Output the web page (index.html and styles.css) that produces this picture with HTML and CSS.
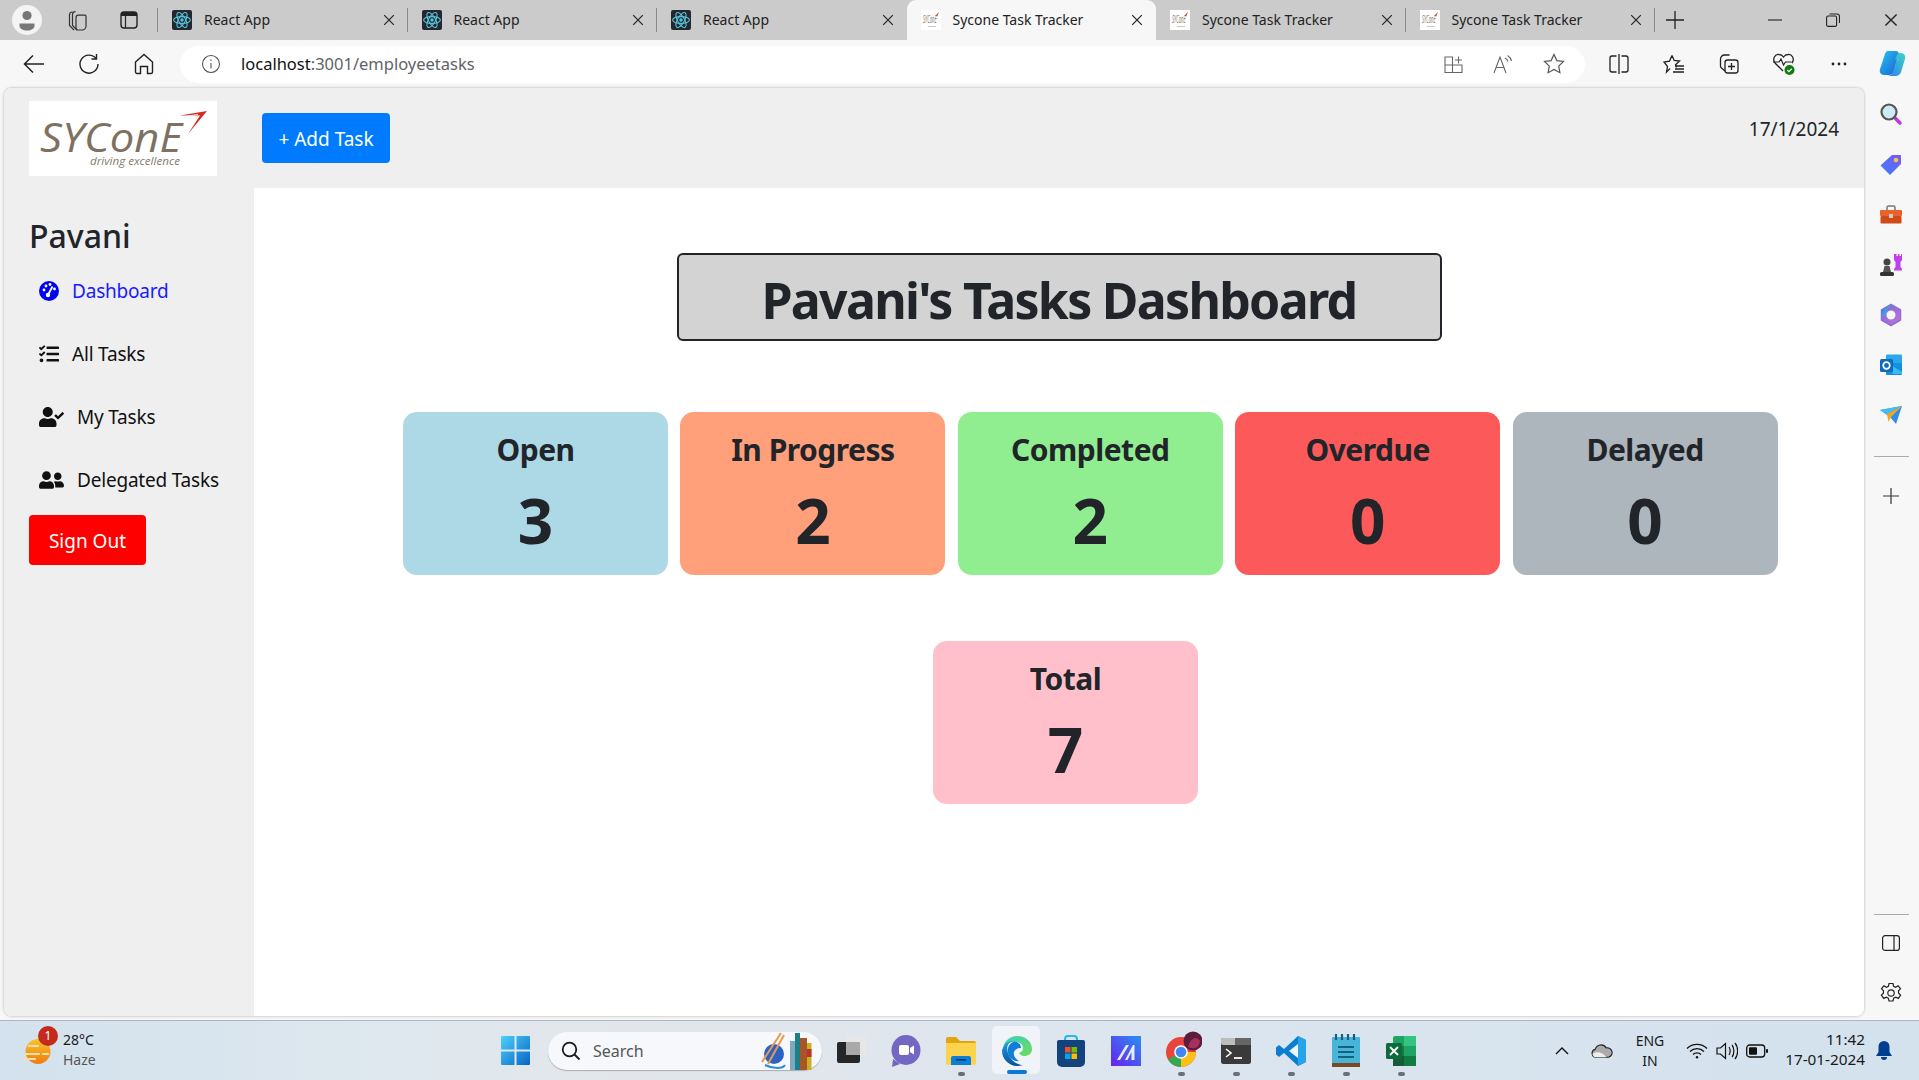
FILE: index.html
```html
<!DOCTYPE html>
<html lang="en">
<head>
<meta charset="utf-8">
<title>Sycone Task Tracker</title>
<link rel="stylesheet" href="styles.css">
</head>
<body>
<svg class="defs" width="0" height="0" aria-hidden="true">
  <symbol id="react" viewBox="0 0 20 20">
    <rect width="20" height="20" rx="2" fill="#23272f"/>
    <g fill="none" stroke="#58c4dc" stroke-width="1.1">
      <ellipse cx="10" cy="10" rx="8.4" ry="3.4"/>
      <ellipse cx="10" cy="10" rx="8.4" ry="3.4" transform="rotate(60 10 10)"/>
      <ellipse cx="10" cy="10" rx="8.4" ry="3.4" transform="rotate(120 10 10)"/>
    </g>
    <circle cx="10" cy="10" r="1.7" fill="#58c4dc"/>
  </symbol>
  <symbol id="x" viewBox="0 0 12 12"><path d="M1.2 1.2 10.8 10.8M10.8 1.2 1.2 10.8" stroke="#222" stroke-width="1.2" fill="none"/></symbol>
</svg>
<div class="window">
  <header class="tabstrip">
    <div class="strip-left">
      <span class="avatar"><svg width="30" height="30" viewBox="0 0 30 30"><circle cx="15" cy="15" r="15" fill="#f4f4f4"/><circle cx="15" cy="10.5" r="4.6" fill="#777"/><path d="M7.5 18.5h15v2.2c0 3-3.4 4.8-7.5 4.8s-7.5-1.8-7.5-4.8z" fill="#777"/></svg></span>
      <span class="strip-btn"><svg width="22" height="24" viewBox="0 0 22 24" fill="none" stroke="#333" stroke-width="1.2"><path d="M8 22 3.5 17.5V7c0-2 1-3 3-3"/><path d="M11 22 6.5 17.5V6.5c0-1.8 1-2.8 3-2.8"/><path d="M10 9.5c0-1.4 1-2.3 2.3-2.3H19c.6 0 1 .4 1 1V18c0 2.200-1.800 4-4 4h-4c-1.200 0-2-.8-2-2z"/></svg></span>
      <span class="strip-btn"><svg width="20" height="20" viewBox="0 0 20 20"><rect x="2" y="2" width="16" height="16" rx="3" fill="none" stroke="#222" stroke-width="1.4"/><path d="M2 5a3 3 0 0 1 3-3h10a3 3 0 0 1 3 3v1H2z" fill="#222"/><path d="M6.500 6v12" stroke="#222" stroke-width="1.2"/></svg></span>
    </div>
    <div class="tab"><svg class="fav"><use href="#react"/></svg><span class="tab-title">React App</span><svg class="tab-x"><use href="#x"/></svg></div>
    <div class="tab"><svg class="fav"><use href="#react"/></svg><span class="tab-title">React App</span><svg class="tab-x"><use href="#x"/></svg></div>
    <div class="tab tab-nosep"><svg class="fav"><use href="#react"/></svg><span class="tab-title">React App</span><svg class="tab-x"><use href="#x"/></svg></div>
    <div class="tab tab-active"><svg class="fav" viewBox="0 0 20 20"><rect width="20" height="20" fill="#fff"/><text class="fav-name" transform="translate(2 13) scale(.42 1)">SYConE</text><path d="M15 5 L18 2 L16 7Z" fill="#d23a2a"/><path d="M7 16.5h8" stroke="#bbb" stroke-width=".8"/></svg><span class="tab-title">Sycone Task Tracker</span><svg class="tab-x"><use href="#x"/></svg></div>
    <div class="tab"><svg class="fav" viewBox="0 0 20 20"><rect width="20" height="20" fill="#fff"/><text class="fav-name" transform="translate(2 13) scale(.42 1)">SYConE</text><path d="M15 5 L18 2 L16 7Z" fill="#d23a2a"/><path d="M7 16.5h8" stroke="#bbb" stroke-width=".8"/></svg><span class="tab-title">Sycone Task Tracker</span><svg class="tab-x"><use href="#x"/></svg></div>
    <div class="tab"><svg class="fav" viewBox="0 0 20 20"><rect width="20" height="20" fill="#fff"/><text class="fav-name" transform="translate(2 13) scale(.42 1)">SYConE</text><path d="M15 5 L18 2 L16 7Z" fill="#d23a2a"/><path d="M7 16.5h8" stroke="#bbb" stroke-width=".8"/></svg><span class="tab-title">Sycone Task Tracker</span><svg class="tab-x"><use href="#x"/></svg></div>
    <span class="new-tab"><svg width="18" height="18" viewBox="0 0 18 18"><path d="M9 0v18M0 9h18" stroke="#222" stroke-width="1.300"/></svg></span>
    <div class="win-controls">
      <svg width="14" height="14" viewBox="0 0 14 14"><path d="M0 7h14" stroke="#222" stroke-width="1.100"/></svg>
      <svg width="14" height="14" viewBox="0 0 14 14" fill="none" stroke="#222" stroke-width="1.100"><rect x=".6" y="3" width="10" height="10.400" rx="1.500"/><path d="M3.500 1h7.500a2.500 2.500 0 0 1 2.500 2.500V10"/></svg>
      <svg width="14" height="14" viewBox="0 0 14 14"><use href="#x"/></svg>
    </div>
  </header>

  <div class="toolbar">
    <span class="tool"><svg width="22" height="20" viewBox="0 0 22 20" fill="none" stroke="#222" stroke-width="1.500"><path d="M21 10H2M10 1.500 1.500 10l8.500 8.500"/></svg></span>
    <span class="tool"><svg width="22" height="22" viewBox="0 0 22 22" fill="none" stroke="#222" stroke-width="1.400"><path d="M18 5.500A9 9 0 1 0 20 11"/><path d="M18.500 1v5h-5"/></svg></span>
    <span class="tool"><svg width="20" height="22" viewBox="0 0 20 22" fill="none" stroke="#222" stroke-width="1.400"><path d="M1.500 9 10 1.500 18.500 9v10a1.500 1.500 0 0 1-1.500 1.500h-3.500V13.500h-7v7H3A1.500 1.500 0 0 1 1.500 19z"/></svg></span>
    <div class="address">
      <span class="info"><svg width="20" height="20" viewBox="0 0 20 20" fill="none" stroke="#555" stroke-width="1.100"><circle cx="10" cy="10" r="8.500"/><path d="M10 9v5.500M10 5.500v1.400"/></svg></span>
      <span class="url"><span class="url-host">localhost</span>:3001/employeetasks</span>
      <span class="addr-icon"><svg width="20" height="20" viewBox="0 0 20 20" fill="none" stroke="#666" stroke-width="1.100"><path d="M1 3h7.500v15.500H1zM1 11h17v7.500H8.500V3M11 6h7M14.500 2.500v7"/></svg></span>
      <span class="addr-icon"><svg width="22" height="20" viewBox="0 0 22 20" fill="none" stroke="#666" stroke-width="1.100"><path d="M1 19 7 3l6 16M3 13.500h8"/><path d="M12 4c1.500.8 2.500 2 3 3.500M14.500 1.500c2 1.200 3.500 3 4 5.500"/></svg></span>
      <span class="addr-icon"><svg width="22" height="22" viewBox="0 0 22 22" fill="none" stroke="#555" stroke-width="1.200"><path d="M11 1.500l2.900 6.100 6.600.9-4.800 4.600 1.200 6.600-5.900-3.200-5.900 3.200 1.200-6.600L1.500 8.500l6.600-.9z"/></svg></span>
    </div>
    <span class="tool tool-first"><svg width="20" height="20" viewBox="0 0 20 20" fill="none" stroke="#222" stroke-width="1.300"><path d="M7.500 2H3a2 2 0 0 0-2 2v12a2 2 0 0 0 2 2h4.500M12.500 2H17a2 2 0 0 1 2 2v12a2 2 0 0 1-2 2h-4.500M10 0v20"/></svg></span>
    <span class="tool"><svg width="22" height="20" viewBox="0 0 22 20" fill="none" stroke="#222" stroke-width="1.300"><path d="M9 1.500l2.200 5 5.300.6-3.900 3.600.9 2.800M7 14.500l-3.500 3.500 1-5.500L1 8l5.500-.9L9 1.500M12 12h9M12 15h9M10 18h11"/></svg></span>
    <span class="tool"><svg width="22" height="22" viewBox="0 0 22 22" fill="none" stroke="#222" stroke-width="1.300"><path d="M7 18 3 14.500a2 2 0 0 1-.5-1.500V6a4 4 0 0 1 4-4h5"/><rect x="7" y="7" width="13" height="13" rx="2.500"/><path d="M13.500 10v7M10 13.500h7"/></svg></span>
    <span class="tool tool-health"><svg width="24" height="24" viewBox="0 0 24 24"><path d="M11 19 3 11c-3-4 0-9 4-8.500 2 0 3.500 1 4.500 2.500 1-1.500 2.500-2.500 4.500-2.500 4-.5 7 4.500 4 8.500" fill="none" stroke="#222" stroke-width="1.300"/><path d="M1 10h6l2-3 2.500 6 2-3h6" fill="none" stroke="#222" stroke-width="1.200"/><circle cx="17.500" cy="18" r="5" fill="#107c10"/><path d="M15.300 18l1.600 1.600 2.900-3" stroke="#fff" stroke-width="1.200" fill="none"/></svg></span>
    <span class="tool"><svg width="16" height="4" viewBox="0 0 16 4" fill="#222"><circle cx="2" cy="2" r="1.400"/><circle cx="8" cy="2" r="1.400"/><circle cx="14" cy="2" r="1.400"/></svg></span>
    <span class="tool tool-copilot"><svg width="30" height="30" viewBox="0 0 30 30"><defs><linearGradient id="cop1" x1="0" y1="0" x2="1" y2="1"><stop offset="0" stop-color="#28c4ee"/><stop offset="1" stop-color="#1a5fd8"/></linearGradient><linearGradient id="cop2" x1="0" y1="1" x2="1" y2="0"><stop offset="0" stop-color="#2e7be8"/><stop offset="1" stop-color="#3ed6c8"/></linearGradient></defs><path d="M10 2h8c2 0 3 1.500 2.500 3L16 22c-.8 2.500-2.500 4-5 4H6c-3 0-5-3-4-6L7 5c.5-2 1.500-3 3-3z" fill="url(#cop1)"/><path d="M20 4h3c3 0 5 3 4 6l-4 13c-.8 2.500-3 4-5.500 4H9c3 0 5-1.500 6-4l3-10c.5-2 1.500-3 3-3h-4z" fill="url(#cop2)"/></svg></span>
  </div>

  <div class="middle">
    <div class="page">
      <aside class="sidebar">
        <div class="logo">
          <svg width="188" height="75" viewBox="0 0 188 75">
            <text class="logo-name" x="11" y="51" textLength="142" lengthAdjust="spacingAndGlyphs">SYConE</text>
            <text class="logo-tag" x="61" y="64" textLength="90" lengthAdjust="spacingAndGlyphs">driving excellence</text>
            <path d="M151 14.500 178 10 159 33 171 14.500Z" fill="#d42a20"/>
            <path d="M155 15.500 169 13.500" stroke="#fff" stroke-width=".9"/>
          </svg>
        </div>
        <h2 class="user-name">Pavani</h2>
        <ul class="nav">
          <li class="nav-item nav-active">
            <svg class="nav-icon" width="20" height="20" viewBox="0 0 20 20"><circle cx="10" cy="10" r="10" fill="#0000f0"/><g fill="#fff"><circle cx="5" cy="9" r="1.400"/><circle cx="7" cy="5" r="1.400"/><circle cx="11" cy="3.500" r="1.400"/><circle cx="15.500" cy="8" r="1.400"/></g><path d="M13.500 5.500 9.500 13" stroke="#fff" stroke-width="1.800"/><circle cx="9" cy="14" r="2.200" fill="#fff"/></svg>
            <span>Dashboard</span>
          </li>
          <li class="nav-item">
            <svg class="nav-icon" width="20" height="20" viewBox="0 0 512 512"><path d="M139.61 35.5a12 12 0 0 0-17 0L58.93 98.81l-22.7-22.12a12 12 0 0 0-17 0L3.53 92.41a12 12 0 0 0 0 17l47.59 47.4a12.78 12.78 0 0 0 17.61 0l15.59-15.62L156.52 69a12.09 12.09 0 0 0 .09-17zm0 159.19a12 12 0 0 0-17 0l-63.68 63.72-22.7-22.1a12 12 0 0 0-17 0L3.53 252a12 12 0 0 0 0 17L51 316.5a12.77 12.77 0 0 0 17.6 0l15.7-15.69 72.2-72.22a12 12 0 0 0 .09-16.9zM64 368c-26.49 0-48.59 21.5-48.59 48S37.53 464 64 464a48 48 0 0 0 0-96zm432 16H208a16 16 0 0 0-16 16v32a16 16 0 0 0 16 16h288a16 16 0 0 0 16-16v-32a16 16 0 0 0-16-16zm0-320H208a16 16 0 0 0-16 16v32a16 16 0 0 0 16 16h288a16 16 0 0 0 16-16V80a16 16 0 0 0-16-16zm0 160H208a16 16 0 0 0-16 16v32a16 16 0 0 0 16 16h288a16 16 0 0 0 16-16v-32a16 16 0 0 0-16-16z"/></svg>
            <span>All Tasks</span>
          </li>
          <li class="nav-item">
            <svg class="nav-icon" width="25" height="20" viewBox="0 0 640 512"><path d="M224 256c70.7 0 128-57.3 128-128S294.700 0 224 0 96 57.300 96 128s57.300 128 128 128zm89.600 32h-16.700c-22.200 10.200-46.900 16-72.900 16s-50.600-5.800-72.900-16h-16.700C60.200 288 0 348.200 0 422.400V464c0 26.500 21.500 48 48 48h352c26.500 0 48-21.500 48-48v-41.600c0-74.200-60.200-134.400-134.400-134.400zm323-128.400l-27.800-28.100c-4.600-4.700-12.100-4.700-16.800-.1l-104.800 104-45.500-45.800c-4.600-4.700-12.100-4.700-16.800-.1l-28.100 27.900c-4.700 4.600-4.700 12.100-.1 16.800l81.700 82.300c4.600 4.700 12.100 4.700 16.800.1l141.300-140.200c4.600-4.700 4.700-12.200.1-16.800z"/></svg>
            <span>My Tasks</span>
          </li>
          <li class="nav-item">
            <svg class="nav-icon" width="25" height="20" viewBox="0 0 640 512"><path d="M192 256c61.900 0 112-50.100 112-112S253.900 32 192 32 80 82.100 80 144s50.100 112 112 112zm76.800 32h-8.300c-20.800 10-43.900 16-68.500 16s-47.600-6-68.500-16h-8.300C51.600 288 0 339.600 0 403.200V432c0 26.500 21.500 48 48 48h288c26.500 0 48-21.500 48-48v-28.800c0-63.600-51.600-115.200-115.200-115.200zM480 256c53 0 96-43 96-96s-43-96-96-96-96 43-96 96 43 96 96 96zm48 32h-3.800c-13.900 4.800-28.600 8-44.200 8s-30.300-3.200-44.200-8H432c-20.400 0-39.200 5.900-55.700 15.400 24.400 26.300 39.700 61.200 39.700 99.800v38.400c0 2.200-.5 4.300-.6 6.400H592c26.500 0 48-21.500 48-48 0-61.900-50.100-112-112-112z"/></svg>
            <span>Delegated Tasks</span>
          </li>
        </ul>
        <button class="sign-out">Sign Out</button>
      </aside>
      <div class="content">
        <div class="topbar">
          <button class="add-task">+ Add Task</button>
          <span class="date">17/1/2024</span>
        </div>
        <main class="dash">
          <h1 class="dash-title">Pavani's Tasks Dashboard</h1>
          <div class="cards">
            <div class="card card-open"><h3 class="card-label">Open</h3><div class="card-num">3</div></div>
            <div class="card card-progress"><h3 class="card-label">In Progress</h3><div class="card-num">2</div></div>
            <div class="card card-done"><h3 class="card-label">Completed</h3><div class="card-num">2</div></div>
            <div class="card card-overdue"><h3 class="card-label">Overdue</h3><div class="card-num">0</div></div>
            <div class="card card-delayed"><h3 class="card-label">Delayed</h3><div class="card-num">0</div></div>
          </div>
          <div class="card card-total"><h3 class="card-label">Total</h3><div class="card-num">7</div></div>
        </main>
      </div>
    </div>
    <nav class="rail">
      <span class="rail-item rail-search"><svg width="24" height="24" viewBox="0 0 24 24"><path d="M15 15l6 6" stroke="#c238e0" stroke-width="3.500" stroke-linecap="round"/><circle cx="10" cy="10" r="7.500" fill="#cfe9f6" stroke="#555" stroke-width="2.200"/></svg></span>
      <span class="rail-item"><svg width="24" height="24" viewBox="0 0 24 24"><defs><linearGradient id="tag" x1="0" y1="1" x2="1" y2="0"><stop offset="0" stop-color="#3a7cff"/><stop offset="1" stop-color="#7a5cf0"/></linearGradient></defs><path d="M13 2h8c.6 0 1 .4 1 1v8L11 22 1.500 12.500z" fill="url(#tag)"/><circle cx="17" cy="7" r="2.300" fill="#f6c744"/></svg></span>
      <span class="rail-item"><svg width="24" height="22" viewBox="0 0 24 22"><path d="M8 6V3.500C8 2.500 8.500 2 9.500 2h5c1 0 1.500.5 1.500 1.500V6" fill="none" stroke="#777" stroke-width="1.500"/><rect x="1" y="6" width="22" height="6" rx="1" fill="#e8622a"/><rect x="1.500" y="12" width="21" height="7.500" rx="1" fill="#cf4a18"/><rect x="10" y="10" width="4" height="4" fill="#ccc"/></svg></span>
      <span class="rail-item"><svg width="24" height="24" viewBox="0 0 24 24"><path d="M16 1h1.500v2H19V1h1.500v2H22V1h1v6l-1.500 2v5l1.500 2v1.500h-8V16l1.500-2V9L15 7V1z" fill="#c040f0"/><circle cx="8" cy="9" r="3.500" fill="#444"/><path d="M5.500 13h5l1.500 6h-8z" fill="#555"/><rect x="1" y="19" width="14" height="4" rx="1.500" fill="#333"/></svg></span>
      <span class="rail-item"><svg width="24" height="24" viewBox="0 0 24 24"><defs><linearGradient id="m3651" x1="0" y1="0" x2="1" y2="1"><stop offset="0" stop-color="#3f6fd8"/><stop offset="1" stop-color="#5cc0e8"/></linearGradient><linearGradient id="m3652" x1="0" y1="0" x2="1" y2="1"><stop offset="0" stop-color="#6a6fd8"/><stop offset="1" stop-color="#d070d8"/></linearGradient></defs><path d="M12 1.500 21.500 7v10L12 22.500 2.500 17V7z" fill="url(#m3652)" stroke="#8a6fd8" stroke-width="1.500" stroke-linejoin="round"/><path d="M12 1.500 2.500 7v7l5.500-3V8z" fill="url(#m3651)"/><circle cx="12" cy="12" r="4.500" fill="#f7f7f7"/></svg></span>
      <span class="rail-item"><svg width="24" height="24" viewBox="0 0 24 24"><rect x="7" y="1.500" width="16" height="11" rx="1" fill="#28a8ea"/><path d="M7 10h16v11a1 1 0 0 1-1 1H8a1 1 0 0 1-1-1z" fill="#1490df"/><path d="M12 12l11 7v2H14z" fill="#50d9ff" opacity=".6"/><rect x="1" y="6" width="13" height="13" rx="1.500" fill="#0f6cbd"/><circle cx="7.500" cy="12.500" r="3.300" fill="none" stroke="#fff" stroke-width="1.700"/></svg></span>
      <span class="rail-item"><svg width="24" height="20" viewBox="0 0 24 20"><path d="M1 5 23 1 17 19 11 12z" fill="#2f8cf0"/><path d="M1 5 23 1 8 9z" fill="#3ec0f4"/><path d="M23 1 8 9l1.500 8 2.500-5z" fill="#f0a820"/></svg></span>
      <span class="rail-sep"></span>
      <span class="rail-item rail-plus"><svg width="16" height="16" viewBox="0 0 16 16"><path d="M8 0v16M0 8h16" stroke="#333" stroke-width="1.200"/></svg></span>
      <span class="rail-sep rail-bottom"></span>
      <span class="rail-item rail-panel"><svg width="18" height="16" viewBox="0 0 18 16" fill="none" stroke="#222" stroke-width="1.200"><rect x=".6" y=".6" width="16.800" height="14.800" rx="2.500"/><path d="M12 .6v14.800"/></svg></span>
      <span class="rail-item rail-gear"><svg width="22" height="22" viewBox="0 0 22 22" fill="none" stroke="#222" stroke-width="1.200"><path d="M9 1.500h4l.6 2.800 2 .9 2.500-1.500 2.400 3.100-2 2 .1 2.400 2 1.900-2.200 3.300-2.600-1.300-2.100 1-.7 2.900H9l-.7-2.900-2-1-2.600 1.300-2.300-3.300 2-1.900.1-2.400-2-2L3.900 3.700l2.500 1.500 2-.9z"/><circle cx="11" cy="11" r="3.200"/></svg></span>
    </nav>
  </div>

  <footer class="taskbar">
    <div class="weather">
      <span class="weather-icon">
        <svg width="30" height="28" viewBox="0 0 30 28"><defs><linearGradient id="sun" x1="0" y1="0" x2="0" y2="1"><stop offset="0" stop-color="#f7c52b"/><stop offset="1" stop-color="#f07a10"/></linearGradient></defs><circle cx="15" cy="13.500" r="12.500" fill="url(#sun)"/><g stroke="#f3dfa8" stroke-width="2.200" stroke-linecap="round"><path d="M6 8h9M2 16h14M1 21h11M20 16h5"/></g></svg>
        <span class="badge">1</span>
      </span>
      <span class="weather-text"><span class="temp">28°C</span><span class="cond">Haze</span></span>
    </div>
    <span class="tb-item"><svg width="29" height="29" viewBox="0 0 29 29"><defs><linearGradient id="win" x1="0" y1="0" x2="1" y2="1"><stop offset="0" stop-color="#4fd0fb"/><stop offset="1" stop-color="#0565c4"/></linearGradient></defs><path d="M0 1a1 1 0 0 1 1-1h12.500v13.500H0zM15.500 0H28a1 1 0 0 1 1 1v12.500H15.500zM0 15.500h13.500V29H1a1 1 0 0 1-1-1zM15.500 15.500H29V28a1 1 0 0 1-1 1H15.500z" fill="url(#win)"/></svg></span>
    <div class="search">
      <svg width="20" height="20" viewBox="0 0 20 20" fill="none" stroke="#1a1a1a" stroke-width="1.800"><circle cx="8.500" cy="8.500" r="6.800"/><path d="M13.500 13.500 18.500 18.500"/></svg>
      <span class="search-text">Search</span>
      <svg class="doodle" width="58" height="46" viewBox="0 0 58 46"><circle cx="15" cy="27" r="10" fill="#2c62c4"/><path d="M3 35 22 6M9 37 25 8" stroke="#e89a50" stroke-width="2"/><path d="M6 38c8 4 18 4 20 0" stroke="#2c8ed4" stroke-width="2" fill="none"/><rect x="31" y="14" width="5" height="29" fill="#7ea8c0"/><rect x="36" y="6" width="5" height="37" fill="#1e7f86"/><rect x="41" y="11" width="7" height="32" fill="#a8552a"/><rect x="48" y="16" width="4.500" height="27" fill="#c8b020"/><rect x="48" y="22" width="4.500" height="8" fill="#c03030"/></svg>
    </div>
    <span class="tb-item tb-gap"><svg width="30" height="28" viewBox="0 0 30 28"><rect x="0" y="7" width="23" height="21" rx="2" fill="#262626"/><rect x="9" y="0" width="21" height="20" rx="2" fill="#e6e6e6" opacity=".85"/><rect x="9" y="7" width="14" height="13" fill="#a9a9a9"/></svg></span>
    <span class="tb-item"><svg width="30" height="32" viewBox="0 0 30 32"><ellipse cx="15" cy="15" rx="14.500" ry="15" fill="#7268c4"/><path d="M2 24l-1 8 8-3z" fill="#7268c4"/><rect x="8" y="10" width="10" height="10" rx="2" fill="#fff"/><path d="M19 13l4-2.500v9L19 17z" fill="#fff"/></svg></span>
    <span class="tb-item tb-open"><svg width="30" height="28" viewBox="0 0 30 28"><path d="M0 2a2 2 0 0 1 2-2h8l4 4h14a2 2 0 0 1 2 2v4H0z" fill="#e3a50e"/><path d="M0 6h30v20a2 2 0 0 1-2 2H2a2 2 0 0 1-2-2z" fill="#fcd34d"/><path d="M5 28v-7a2 2 0 0 1 2-2h16a2 2 0 0 1 2 2v7z" fill="#0a7ed8"/><rect x="10" y="22" width="10" height="1.600" fill="#063a66"/></svg></span>
    <span class="tb-item tb-edge"><svg width="30" height="30" viewBox="0 0 30 30"><defs><linearGradient id="edge1" x1="0" y1="0" x2="1" y2="1"><stop offset="0" stop-color="#38d0c0"/><stop offset="1" stop-color="#6fdc58"/></linearGradient><linearGradient id="edge2" x1="0" y1="0" x2="0" y2="1"><stop offset="0" stop-color="#1fa0e0"/><stop offset="1" stop-color="#0a4f9e"/></linearGradient></defs><path d="M15 0c9 0 15 6 15 13 0 5-4 7-8 7-2 0-4-1-5-3 3-1 4-3 4-5 0-4-4-6-8-6S3 7 1 12C2 5 8 0 15 0z" fill="url(#edge1)"/><path d="M1 12C3 7 7 5 11 5c-5 1-7 6-5 12 2 7 9 12 15 12-2 .7-4 1-6 1C7 30 0 23 0 15c0-1 .3-2 1-3z" fill="url(#edge2)"/><path d="M6 17c-1-5 1-9 5-11 5-1 8 2 8 6-3 0-6 1-7 4s1 7 5 9c-5 1-10-3-11-8z" fill="#0f7ed8"/></svg></span>
    <span class="tb-item"><svg width="30" height="32" viewBox="0 0 30 32"><path d="M9 6V4a3 3 0 0 1 3-3h6a3 3 0 0 1 3 3v2" fill="none" stroke="#22b8f0" stroke-width="2"/><path d="M1 7a2 2 0 0 1 2-2h24a2 2 0 0 1 2 2v20a5 5 0 0 1-5 5H6a5 5 0 0 1-5-5z" fill="#12437c"/><rect x="9" y="12" width="5.500" height="5.500" fill="#f25022"/><rect x="15.500" y="12" width="5.500" height="5.500" fill="#7fba00"/><rect x="9" y="18.500" width="5.500" height="5.500" fill="#00a4ef"/><rect x="15.500" y="18.500" width="5.500" height="5.500" fill="#ffb900"/></svg></span>
    <span class="tb-item"><svg width="30" height="30" viewBox="0 0 30 30"><defs><linearGradient id="ma" x1="1" y1="0" x2="0" y2="1"><stop offset="0" stop-color="#2a90f0"/><stop offset="1" stop-color="#6a20f0"/></linearGradient></defs><rect width="30" height="30" fill="url(#ma)"/><path d="M6 24 15 9h3L9 24zM14 24l8-15h1.500v15h-3v-8l-4 8z" fill="#e8ecff"/></svg></span>
    <span class="tb-item tb-open tb-chrome"><svg width="36" height="36" viewBox="0 0 36 36"><circle cx="15" cy="21" r="15" fill="#e8453c"/><path d="M15 21 2 28.500A15 15 0 0 0 15 36l7.500-13z" fill="#34a853"/><path d="M15 21h15a15 15 0 0 1-15 15z" fill="#fbc116"/><circle cx="15" cy="21" r="6.800" fill="#fff"/><circle cx="15" cy="21" r="5.300" fill="#4285f4"/><circle cx="27" cy="10" r="9.500" fill="#5e1c3c"/><path d="M22 16c2-8 8-12 12-6-1 6-4 9-12 6z" fill="#a8305c"/></svg></span>
    <span class="tb-item tb-open"><svg width="30" height="26" viewBox="0 0 30 26"><rect width="30" height="26" rx="2.500" fill="#3a3a3a"/><rect width="30" height="7" rx="2" fill="#bdbdbd"/><rect x="14" width="16" height="7" fill="#666"/><path d="M5 11l5 4-5 4" stroke="#fff" stroke-width="1.600" fill="none"/><path d="M13 20h8" stroke="#fff" stroke-width="1.800"/></svg></span>
    <span class="tb-item tb-open"><svg width="30" height="30" viewBox="0 0 30 30"><path d="M22 0 30 4v22l-8 4L8 17l-5 4-3-2.500V11.500L3 9l5 4z" fill="#0a7ed0"/><path d="M22 8 13 15l9 7z" fill="#f0f4f8"/><path d="M22 0 30 4v22l-8 4z" fill="#25a4ea"/></svg></span>
    <span class="tb-item tb-open"><svg width="28" height="34" viewBox="0 0 28 34"><rect y="3" width="28" height="28" rx="1" fill="#48b4d8"/><rect y="29" width="28" height="4" fill="#7a4a20"/><path d="M4 0v6M10 0v6M16 0v6M22 0v6" stroke="#1b5e80" stroke-width="2.200"/><path d="M6 13h16M6 18h16M6 23h16" stroke="#13637f" stroke-width="2"/></svg></span>
    <span class="tb-item tb-open"><svg width="30" height="30" viewBox="0 0 30 30"><rect x="7" y="0" width="23" height="30" rx="2" fill="#21a366"/><rect x="18" y="0" width="12" height="10" fill="#33c481"/><rect x="18" y="20" width="12" height="10" fill="#107c41"/><rect x="7" y="10" width="11" height="10" fill="#107c41"/><rect x="7" y="20" width="11" height="10" fill="#185c37"/><rect x="0" y="7" width="16" height="16" rx="1.500" fill="#0e6a3a"/><path d="M4 11l8 8M12 11l-8 8" stroke="#fff" stroke-width="1.800"/></svg></span>
    <div class="tray">
      <span class="tray-icon tray-chevron"><svg width="14" height="8" viewBox="0 0 14 8" fill="none" stroke="#111" stroke-width="1.400"><path d="M1 7l6-6 6 6"/></svg></span>
      <span class="tray-icon tray-cloud"><svg width="22" height="14" viewBox="0 0 22 14"><path d="M5 13.300a4 4 0 0 1-.8-7.900 6 6 0 0 1 11-1.500 4.700 4.700 0 0 1 2.200 9.400z" fill="#aaa" stroke="#222" stroke-width="1.100"/><path d="M1.500 10c4-3 10-2 14 3.300H5c-2 0-3-1-3.500-3.300z" fill="#eee"/></svg></span>
      <span class="lang"><span>ENG</span><span>IN</span></span>
      <span class="tray-icon tray-wifi"><svg width="22" height="16" viewBox="0 0 22 16" fill="none" stroke="#111" stroke-width="1.300"><path d="M1 5.500a14 14 0 0 1 20 0M4 8.500a10 10 0 0 1 14 0M7 11.500a5.600 5.600 0 0 1 8 0"/><circle cx="11" cy="14.300" r="1.200" fill="#111" stroke="none"/></svg></span>
      <span class="tray-icon"><svg width="22" height="18" viewBox="0 0 22 18" fill="none" stroke="#111" stroke-width="1.200"><path d="M1 6h3.500L9.500 1.500v15L4.500 12H1zM13 5c1.500 2 1.500 6 0 8M16 3c2.500 3 2.500 9 0 12M19 1c3.500 4 3.500 12 0 16"/></svg></span>
      <span class="tray-icon"><svg width="22" height="14" viewBox="0 0 22 14"><rect x=".7" y="1" width="18" height="12" rx="3" fill="none" stroke="#111" stroke-width="1.300"/><rect x="3" y="3.300" width="8" height="7.400" rx="1" fill="#111"/><rect x="20" y="5" width="2" height="4" rx="1" fill="#111"/></svg></span>
      <span class="clock"><span>11:42</span><span>17-01-2024</span></span>
      <span class="tray-bell"><svg width="16" height="20" viewBox="0 0 16 20" fill="#003e92"><path d="M8 0a5.500 5.500 0 0 1 5.500 5.500V11l2.500 4H0l2.500-4V5.500A5.500 5.500 0 0 1 8 0z"/><path d="M5 16h6a3 3 0 0 1-6 0z"/></svg></span>
    </div>
  </footer>
</div>
</body>
</html>
```
FILE: styles.css
```css
* { box-sizing: border-box; }
html, body { margin: 0; padding: 0; height: 100%; overflow: hidden; }
body { font-family: "Noto Sans", "Open Sans", sans-serif; color: #212529; background: #f7f7f7; }
.defs { position: absolute; }
.window { width: 1919px; height: 1080px; display: flex; flex-direction: column; }

/* tab strip */
.tabstrip { height: 40px; background: #cbcbcb; display: flex; align-items: stretch; flex: none; }
.strip-left { width: 158px; display: flex; align-items: center; padding-left: 12px; position: relative; flex: none; }
.strip-left::after, .tab::after { content: ""; position: absolute; right: 0; top: 8px; height: 24px; width: 1px; background: #8a8a8a; }
.avatar { width: 30px; height: 30px; display: flex; }
.strip-btn { width: 52px; display: flex; justify-content: center; margin-left: 9px; }
.strip-btn + .strip-btn { margin-left: 0; }
.tab { width: 249.5px; flex: none; display: flex; align-items: center; position: relative; padding-left: 14px; font-size: 14px; color: #222; }
.tab-nosep::after, .tab-active::after { display: none; }
.tab-active { background: #f7f7f7; border-radius: 9px 9px 0 0; }
.fav { width: 20px; height: 20px; flex: none; }
.fav-name { font-family: "Open Sans", sans-serif; font-style: italic; font-size: 10px; fill: #7e7161; }
.tab-title { margin-left: 12px; flex: 1; white-space: nowrap; margin-top: -2px; }
.tab-x { width: 12px; height: 12px; margin-right: 13px; flex: none; }
.new-tab { margin-left: 11px; display: flex; align-items: center; }
.win-controls { margin-left: auto; width: 163px; padding-right: 21px; display: flex; align-items: center; justify-content: space-between; padding-left: 12px; }

/* toolbar */
.toolbar { height: 48px; background: #f7f7f7; display: flex; align-items: center; padding-left: 6.5px; flex: none; }
.tool { width: 55px; height: 36px; display: flex; align-items: center; justify-content: center; flex: none; }
.tool-first { margin-left: 6.5px; }
.tool-copilot { width: 53px; }
.address { flex: 1; height: 37px; margin-left: 8.5px; background: #fff; border-radius: 19px; display: flex; align-items: center; padding: 0 6px 0 21px; }
.info { width: 20px; display: flex; }
.url { margin: -2px 0 0 20px; font-size: 16.5px; color: #5f6368; flex: 1; }
.url-host { color: #111; }
.addr-icon { width: 50px; display: flex; justify-content: center; }

/* middle */
.middle { flex: 1; display: flex; min-height: 0; padding-left: 4px; }
.page { width: 1860px; height: 928px; display: flex; border-radius: 8px; overflow: hidden; box-shadow: 0 0 3px rgba(0,0,0,.3); background: #fff; }
.sidebar { width: 250px; background: #efefef; padding: 13px 0 0 25px; flex: none; }
.logo { width: 188px; height: 75px; background: #fff; display: flex; }
.logo-name { font-family: "Open Sans", sans-serif; font-style: italic; font-size: 41px; fill: #7e7161; font-weight: 400; }
.logo-tag { font-family: "Open Sans", sans-serif; font-style: italic; font-size: 11px; fill: #847a6e; }
.user-name { margin: 38px 0 0; font-size: 32px; line-height: 44px; font-weight: 500; color: #212529; }
.nav { list-style: none; margin: 1px 0 0; padding: 0 0 0 10px; }
.nav-item { height: 63px; display: flex; align-items: center; font-size: 19px; color: #111; gap: 13px; white-space: nowrap; letter-spacing: -.2px; }
.nav-active { color: #1a1aff; }
.nav-icon { flex: none; fill: #111; }
.sign-out { display: block; margin-top: 3.500px; width: 117px; height: 50px; border: 0; border-radius: 4px; background: #ff0000; color: #fff; font: 19px "Noto Sans", sans-serif; padding: 2px 0 0; }

.content { flex: 1; display: flex; flex-direction: column; }
.topbar { height: 100px; background: #efefef; display: flex; align-items: flex-start; justify-content: space-between; padding: 25px 25px 0 8px; flex: none; }
.add-task { width: 128px; height: 50px; border: 0; border-radius: 4px; background: #007bff; color: #fff; font: 19px "Noto Sans", sans-serif; padding: 2px 0 0; }
.date { font-size: 19px; line-height: 26px; margin-top: 3px; color: #212529; }
.dash { flex: 1; background: #fff; padding-top: 65px; }
.dash-title { width: 765px; height: 88px; margin: 0 auto; background: #d3d3d3; border: 2px solid #212529; border-radius: 6px; text-align: center; font-size: 50px; line-height: 90px; font-weight: 700; letter-spacing: -1.7px; }
.cards { display: flex; gap: 12.4px; margin: 71px 0 0 149px; }
.card { width: 265px; height: 163px; border-radius: 14px; text-align: center; padding-top: 17px; }
.card-label { margin: 0; font-size: 30px; line-height: 42px; font-weight: 700; letter-spacing: -.5px; }
.card-num { font-size: 62px; line-height: 84px; font-weight: 700; margin-top: 7px; }
.card-open { background: #add8e6; }
.card-progress { background: #ffa07a; }
.card-done { background: #90ee90; }
.card-overdue { background: #fc5a5a; }
.card-delayed { background: #adb5bd; }
.card-total { background: #ffc0cb; margin: 66px 0 0 679px; }

/* right rail */
.rail { flex: 1; display: flex; flex-direction: column; align-items: center; padding: 2px 1px 0 0; }
.rail-item { height: 50px; width: 100%; display: flex; align-items: center; justify-content: center; flex: none; }
.rail-search svg { margin-top: -2px; }
.rail-sep { width: 35px; height: 1px; background: #aaa; margin-top: 16px; flex: none; }
.rail-plus { margin-top: 14px; }
.rail-bottom { margin-top: auto; }
.rail-panel { margin-top: 3px; }
.rail-gear { margin-bottom: 2px; }

/* taskbar */
.taskbar { height: 60px; flex: none; display: flex; align-items: center; border-top: 1px solid #aab6c2; background: linear-gradient(90deg, #d3e2ee 0%, #dfe8ee 22%, #e2e6ea 32%, #dce5ef 60%, #d3e2ed 100%); }
.weather { width: 487.5px; display: flex; align-items: center; padding-left: 23px; flex: none; }
.weather-icon { position: relative; width: 30px; height: 28px; margin-top: 3px; display: flex; }
.badge { position: absolute; left: 15px; top: -12px; width: 20px; height: 20px; border-radius: 50%; background: #c42b1c; color: #fff; font-size: 12px; line-height: 20px; text-align: center; }
.weather-text { display: flex; flex-direction: column; margin: -2px 0 0 10px; font-size: 14px; line-height: 20px; }
.temp { color: #1a1a1a; }
.cond { color: #555; }
.tb-item { width: 55px; height: 59px; flex: none; display: flex; align-items: center; justify-content: center; position: relative; }
.tb-gap { margin-left: 1.5px; }
.tb-gap svg { margin: -4px 0 0 2px; }
.tb-open::after { content: ""; position: absolute; bottom: 4px; left: 24.5px; width: 7px; height: 4px; border-radius: 2px; background: #6a6f75; }
.tb-edge::before { content: ""; position: absolute; left: 3.5px; top: 5px; width: 48px; height: 48px; border-radius: 5px; background: rgba(255,255,255,.55); }
.tb-edge svg { position: relative; margin-left: 1px; }
.tb-edge::after { content: ""; position: absolute; bottom: 6px; left: 18px; width: 20px; height: 4px; border-radius: 2px; background: #0f78d4; }
.tb-chrome svg { margin-top: -3px; margin-left: 5px; }
.search { width: 274px; height: 38px; margin-left: 5.5px; background: #f6f8fb; border-radius: 19px; box-shadow: 0 1px 1px rgba(0,0,0,.25); display: flex; align-items: center; padding-left: 13px; position: relative; flex: none; }
.search-text { margin-left: 12px; font-size: 16px; color: #555; }
.doodle { position: absolute; right: 5px; bottom: -3px; }
.tray { margin-left: auto; display: flex; align-items: center; padding-right: 16px; flex: none; }
.tray-icon { width: 30px; display: flex; justify-content: center; align-items: center; flex: none; }
.tray-chevron, .tray-cloud { width: 40px; }
.lang { width: 56px; display: flex; flex-direction: column; align-items: center; font-size: 14px; line-height: 20px; color: #1a1a1a; margin-right: 4px; }
.clock { width: 93px; margin-top: -3px; display: flex; flex-direction: column; align-items: flex-end; font-size: 15.3px; line-height: 20px; color: #1a1a1a; white-space: nowrap; }
.tray-bell { width: 38px; display: flex; justify-content: center; }
```
